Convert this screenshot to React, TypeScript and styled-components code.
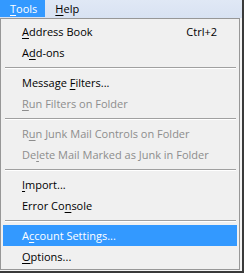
import React from "react";
import styled, { createGlobalStyle } from "styled-components";

const GlobalStyle = createGlobalStyle`
  html, body { margin: 0; padding: 0; background: #ffffff; }
  body { font-family: "Open Sans", "Noto Sans", sans-serif; }
`;

const Frame = styled.div`
  width: 242px;
  height: 271px;
  border-right: 2px solid #3a3a3a;
  border-bottom: 2px solid #3a3a3a;
  background: #f4f4f4;
  display: flex;
  flex-direction: column;
  overflow: hidden;
`;

const MenuBar = styled.div`
  height: 18px;
  flex: 0 0 18px;
  display: flex;
  align-items: stretch;
  background: linear-gradient(#e0e8f5, #d8e2f2);
`;

const MenuTitle = styled.div<{ $active?: boolean }>`
  padding: 0 8px 0 10px;
  font-size: 11px;
  line-height: 17px;
  color: ${(p) => (p.$active ? "#ffffff" : "#000000")};
  background: ${(p) => (p.$active ? "#3399ff" : "transparent")};
  height: 17px;
`;

const Menu = styled.div`
  width: 234px;
  border: 1px solid #979797;
  padding: 2px;
  background: #f0f0f0;
  display: flex;
  flex-direction: column;
`;

const Item = styled.div<{ $disabled?: boolean; $active?: boolean }>`
  height: 21px;
  display: flex;
  align-items: center;
  justify-content: space-between;
  padding: 0 20px 0 19px;
  font-size: 11px;
  line-height: 21px;
  white-space: nowrap;
  color: ${(p) =>
    p.$active ? "#ffffff" : p.$disabled ? "#8d8d8d" : "#000000"};
  background: ${(p) => (p.$active ? "#3399ff" : "transparent")};
`;

const Shortcut = styled.span`
  font-size: 11px;
`;

const Separator = styled.div`
  height: 9px;
  display: flex;
  align-items: center;
  padding: 0 1px 0 2px;
  &::after {
    content: "";
    flex: 1;
    height: 1px;
    background: #a0a0a0;
    box-shadow: 0 1px 0 #ffffff;
  }
`;

const Key = styled.span`
  text-decoration: underline;
  text-underline-offset: 2px;
`;

type Entry =
  | { sep: true }
  | {
      sep?: false;
      pre: string;
      key: string;
      post: string;
      shortcut?: string;
      disabled?: boolean;
      active?: boolean;
    };

const entries: Entry[] = [
  { pre: "", key: "A", post: "ddress Book", shortcut: "Ctrl+2" },
  { pre: "A", key: "d", post: "d-ons" },
  { sep: true },
  { pre: "Message ", key: "F", post: "ilters..." },
  { pre: "", key: "R", post: "un Filters on Folder", disabled: true },
  { sep: true },
  { pre: "R", key: "u", post: "n Junk Mail Controls on Folder", disabled: true },
  { pre: "De", key: "l", post: "ete Mail Marked as Junk in Folder", disabled: true },
  { sep: true },
  { pre: "", key: "I", post: "mport..." },
  { pre: "Error Co", key: "n", post: "sole" },
  { sep: true },
  { pre: "A", key: "c", post: "count Settings...", active: true },
  { pre: "", key: "O", post: "ptions..." },
];

export default function App() {
  return (
    <>
      <GlobalStyle />
      <Frame>
        <MenuBar>
          <MenuTitle $active>
            <Key>T</Key>ools
          </MenuTitle>
          <MenuTitle>
            <Key>H</Key>elp
          </MenuTitle>
        </MenuBar>
        <Menu>
          {entries.map((e, i) =>
            e.sep ? (
              <Separator key={i} />
            ) : (
              <Item key={i} $disabled={e.disabled} $active={e.active}>
                <span>
                  {e.pre}
                  <Key>{e.key}</Key>
                  {e.post}
                </span>
                {e.shortcut && <Shortcut>{e.shortcut}</Shortcut>}
              </Item>
            )
          )}
        </Menu>
      </Frame>
    </>
  );
}
